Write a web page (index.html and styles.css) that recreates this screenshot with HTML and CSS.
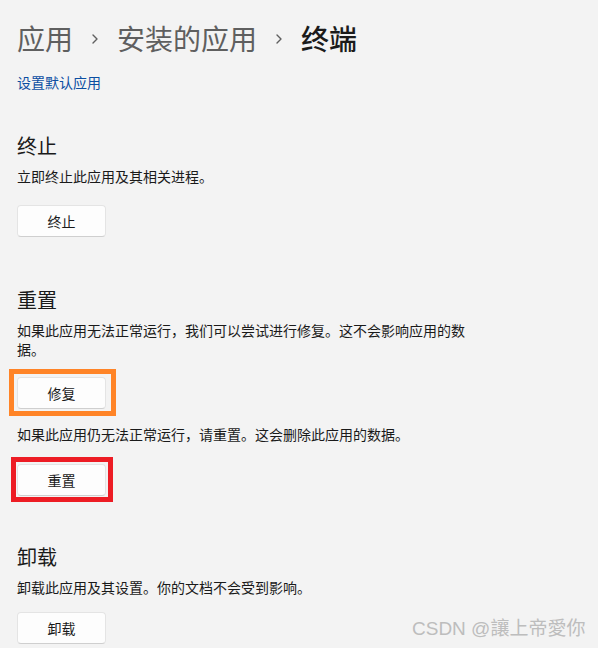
FILE: index.html
```html
<!DOCTYPE html>
<html lang="zh-CN">
<head>
<meta charset="utf-8">
<title>终端</title>
<link rel="stylesheet" href="styles.css">
</head>
<body>
<main class="page">
  <h1 class="crumbs">
    <span class="crumb">应用</span>
    <svg class="chev" width="10" height="12" viewBox="0 0 10 12"><path d="M3 2 L7 6 L3 10" fill="none" stroke="#5f5f5f" stroke-width="1.4" stroke-linecap="round" stroke-linejoin="round"/></svg>
    <span class="crumb">安装的应用</span>
    <svg class="chev" width="10" height="12" viewBox="0 0 10 12"><path d="M3 2 L7 6 L3 10" fill="none" stroke="#5f5f5f" stroke-width="1.4" stroke-linecap="round" stroke-linejoin="round"/></svg>
    <span class="crumb current">终端</span>
  </h1>
  <a class="link" href="#">设置默认应用</a>

  <section class="sec sec-terminate">
    <h2 class="sec-title">终止</h2>
    <p class="desc">立即终止此应用及其相关进程。</p>
    <button class="btn btn-first">终止</button>
  </section>

  <section class="sec sec-reset">
    <h2 class="sec-title">重置</h2>
    <p class="desc desc-wrap">如果此应用无法正常运行，我们可以尝试进行修复。这不会影响应用的数据。</p>
    <button class="btn btn-repair mark-orange">修复</button>
    <p class="desc desc-second">如果此应用仍无法正常运行，请重置。这会删除此应用的数据。</p>
    <button class="btn btn-reset mark-red">重置</button>
  </section>

  <section class="sec sec-uninstall">
    <h2 class="sec-title">卸载</h2>
    <p class="desc">卸载此应用及其设置。你的文档不会受到影响。</p>
    <button class="btn btn-last">卸载</button>
  </section>
</main>
<div class="watermark">CSDN @讓上帝愛你</div>
</body>
</html>
```

FILE: styles.css
```css
html, body {
  margin: 0;
  padding: 0;
  background: #f3f3f3;
}
body {
  width: 598px;
  height: 648px;
  overflow: hidden;
  position: relative;
  font-family: "Noto Sans CJK SC", "Noto Sans", sans-serif;
  color: #1a1a1a;
}
.page {
  padding: 20px 0 0 17px;
  display: flex;
  flex-direction: column;
  align-items: flex-start;
}
.crumbs {
  margin: 0;
  display: flex;
  align-items: center;
  font-size: 28px;
  line-height: 36px;
  font-weight: 400;
  height: 36px;
}
.crumb {
  color: #5f5f5f;
}
.crumb.current {
  color: #1b1b1b;
  font-weight: 500;
}
.chev {
  margin: 2px 17px 0 17px;
  display: block;
}
.link {
  margin-top: 16px;
  font-size: 14px;
  line-height: 20px;
  color: #0b4ea2;
  text-decoration: none;
}
.sec {
  display: flex;
  flex-direction: column;
  align-items: flex-start;
}
.sec-terminate { margin-top: 40px; }
.sec-reset { margin-top: 49px; }
.sec-uninstall { margin-top: 47px; }
.sec-title {
  margin: 0;
  font-size: 20px;
  line-height: 28px;
  font-weight: 400;
  color: #1a1a1a;
}
.desc {
  margin: 6px 0 0 0;
  font-size: 14px;
  line-height: 20px;
  color: #1a1a1a;
}
.desc-wrap {
  width: 455px;
  line-height: 19px;
  margin-top: 7px;
}
.desc-second {
  margin-top: 15px;
}
.btn {
  position: relative;
  width: 89px;
  height: 32px;
  box-sizing: border-box;
  background: #fdfdfd;
  border: 1px solid #e4e4e4;
  border-bottom-color: #cfcfcf;
  border-radius: 4px;
  font-family: "Noto Sans CJK SC", sans-serif;
  font-size: 14px;
  color: #1a1a1a;
  padding: 0;
}
.btn-first { margin-top: 19px; }
.btn-repair { margin-top: 18px; }
.btn-reset { margin-top: 20px; }
.btn-last { margin-top: 15px; }

.mark-orange::after,
.mark-red::after {
  content: "";
  position: absolute;
  box-sizing: border-box;
  border-width: 5px;
  border-style: solid;
  pointer-events: none;
}
.mark-orange::after {
  left: -9px;
  top: -9px;
  width: 107px;
  height: 47px;
  border-color: #ff8427;
}
.mark-red::after {
  left: -7px;
  top: -8px;
  width: 102px;
  height: 45px;
  border-color: #ed1c24;
}
.watermark {
  position: absolute;
  left: 412px;
  top: 616px;
  font-family: "Liberation Sans", "Noto Sans CJK TC", sans-serif;
  font-size: 19px;
  line-height: 26px;
  color: #bdbdbd;
  white-space: nowrap;
}
```
